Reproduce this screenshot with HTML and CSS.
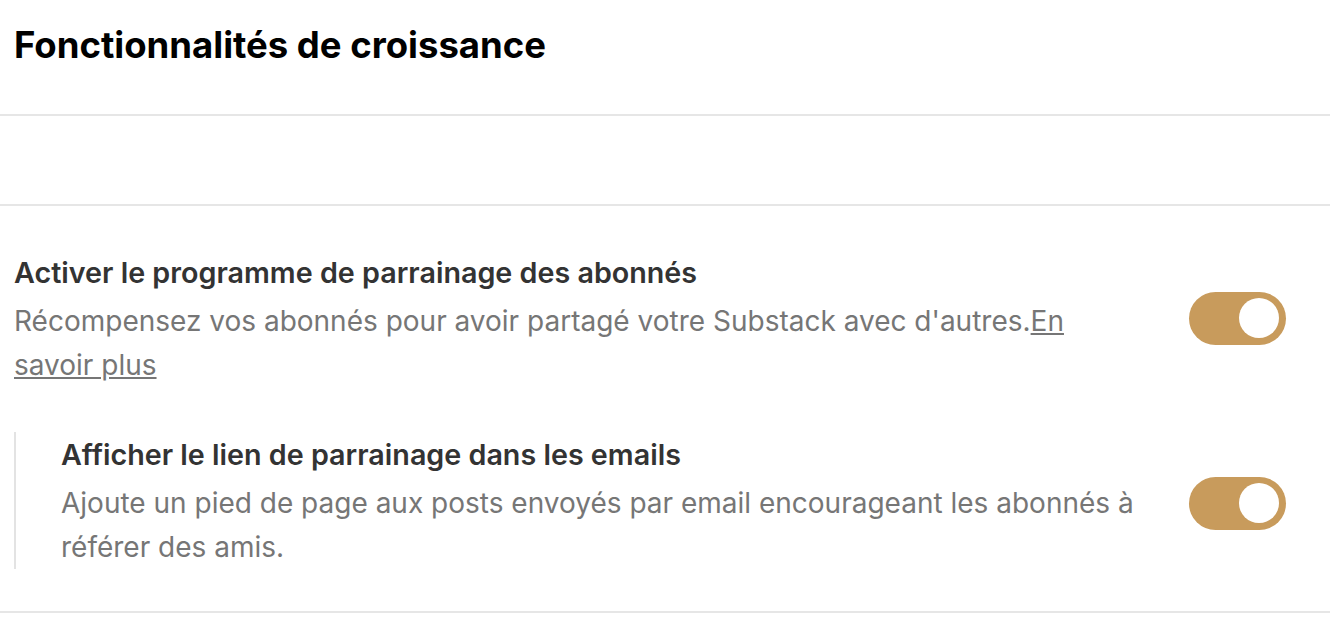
FILE: index.html
```html
<!DOCTYPE html>
<html>
  <head>
    <title>Fonctionnalités de croissance</title>
    <link rel="stylesheet" href="styles.css">
  </head>
  <body>
    <div class="page-header">
      <h1>Fonctionnalités de croissance</h1>
    </div>
    <div class="spacer"></div>
    <div class="settings">
      <div class="setting">
        <div class="setting-text">
          <div class="setting-title">Activer le programme de parrainage des abonnés</div>
          <p class="setting-desc">Récompensez vos abonnés pour avoir partagé votre Substack avec d'autres.<a href="#">En savoir plus</a></p>
        </div>
        <div class="toggle on"><span class="knob"></span></div>
      </div>
      <div class="setting sub">
        <div class="setting-text">
          <div class="setting-title">Afficher le lien de parrainage dans les emails</div>
          <p class="setting-desc">Ajoute un pied de page aux posts envoyés par email encourageant les abonnés à référer des amis.</p>
        </div>
        <div class="toggle on"><span class="knob"></span></div>
      </div>
    </div>
  </body>
</html>
```

FILE: styles.css
```css
body {
  font-family: Inter, Roboto, "Liberation Sans", sans-serif;
  background-color: #fff;
  margin: 0;
  padding: 0;
}

.page-header {
  height: 114px;
  padding: 0 14px;
  border-bottom: 2px solid #e6e6e6;
  display: flex;
  align-items: flex-start;
}

h1 {
  margin: 24px 0 0;
  font-size: 36.5px;
  line-height: 42px;
  font-weight: 700;
  color: #000;
}

.spacer {
  height: 88px;
  border-bottom: 2px solid #e6e6e6;
}

.settings {
  padding: 49px 44px 42px 14px;
  border-bottom: 2px solid #e6e6e6;
}

.setting {
  display: flex;
  align-items: center;
  gap: 50px;
}

.setting.sub {
  margin-top: 45px;
  padding: 5px 0 0 45px;
  border-left: 2px solid #e3e3e3;
}

.setting-text {
  flex: 1;
}

.setting-title {
  font-size: 28.7px;
  line-height: 36px;
  font-weight: 600;
  color: #333;
}

.setting-desc {
  margin: 8px 0 0;
  font-size: 28px;
  line-height: 44px;
  color: #767676;
}

.setting-desc a {
  color: #767676;
  text-decoration: underline;
}

.toggle {
  width: 97px;
  height: 53px;
  border-radius: 27px;
  background-color: #c89b5c;
  flex-shrink: 0;
  display: flex;
  align-items: center;
  justify-content: flex-end;
  padding: 0 7px;
  box-sizing: border-box;
}

.setting:first-child .toggle {
  margin-bottom: 6px;
}

.knob {
  width: 40px;
  height: 40px;
  border-radius: 50%;
  background-color: #fff;
}
```
